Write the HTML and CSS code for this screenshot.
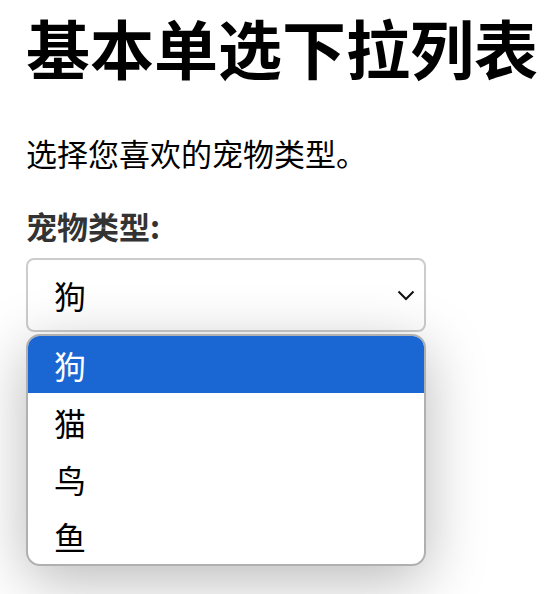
FILE: index.html
```html
<!DOCTYPE html>
<html lang="zh-CN">
<head>
    <meta charset="utf-8">
    <title>基本单选下拉列表</title>
    <link rel="stylesheet" href="styles.css">
</head>
<body>
    <!-- Heading -->
    <h1>基本单选下拉列表</h1>
    <p class="intro">选择您喜欢的宠物类型。</p>

    <!-- Pet select -->
    <div class="field">
        <label for="pet-select">宠物类型:</label>
        <div class="select" id="pet-select">
            <span class="select-value">狗</span>
            <svg class="chevron" width="18" height="11" viewBox="0 0 18 11">
                <path d="M1.5 1.5 L9 9 L16.5 1.5" fill="none" stroke="#111" stroke-width="2"/>
            </svg>
        </div>
        <ul class="options">
            <li class="option selected">狗</li>
            <li class="option">猫</li>
            <li class="option">鸟</li>
            <li class="option">鱼</li>
        </ul>
    </div>
</body>
</html>
```

FILE: styles.css
```css
/* Global Styles */
* {
    margin: 0;
    padding: 0;
    box-sizing: border-box;
}

body {
    font-family: "Noto Sans CJK SC", "Noto Sans", sans-serif;
    font-size: 32px;
    background-color: #fff;
    color: #000;
    padding: 0 0 28px 26px;
}

h1 {
    margin-top: 14px;
    font-size: 64px;
    line-height: 64px;
    font-weight: bold;
}

.intro {
    margin-top: 59px;
    font-size: 31px;
    line-height: 32px;
}

/* Field */
.field {
    width: 400px;
    margin-top: 41px;
}

.field label {
    display: block;
    font-size: 31px;
    line-height: 32px;
    font-weight: bold;
    color: #333;
}

.select {
    display: flex;
    align-items: center;
    justify-content: space-between;
    height: 74px;
    margin-top: 16px;
    padding: 0 9px 0 26px;
    border: 2px solid #ccc;
    border-radius: 8px;
    background-color: #fff;
    font-size: 32px;
}

.chevron {
    display: block;
}

/* Dropdown list */
.options {
    position: relative;
    z-index: 10;
    list-style: none;
    margin-top: 2px;
    border: 2px solid #b0b0b0;
    border-radius: 14px;
    background-color: #fff;
    overflow: hidden;
    box-shadow: 0 14px 60px rgba(0, 0, 0, 0.28);
}

.option {
    height: 57px;
    display: flex;
    align-items: center;
    padding-left: 26px;
    font-size: 32px;
    color: #000;
}

.option.selected {
    background-color: #1a66d2;
    color: #fff;
}
```
